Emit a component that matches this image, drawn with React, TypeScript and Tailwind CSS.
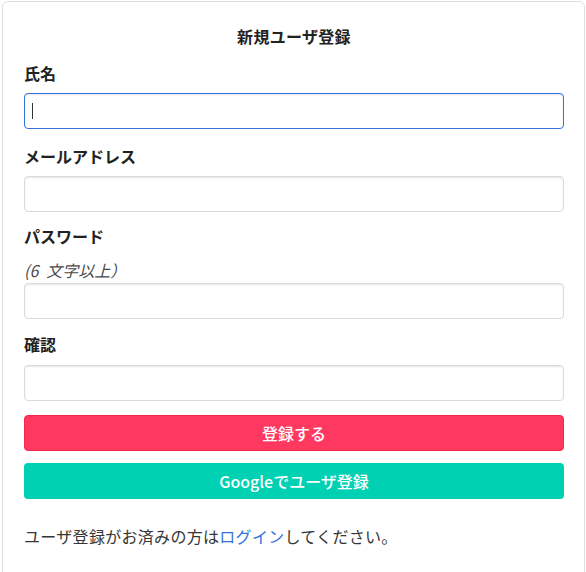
import { useState } from 'react'

const font = { fontFamily: '"Noto Sans CJK JP", "Noto Sans", sans-serif' }

const inputBase =
  'block w-full h-9 rounded-[4px] border bg-white px-[11px] text-[16px] text-[#363636] outline-none shadow-[inset_0_1px_2px_rgba(10,10,10,0.1)]'

const labelCls = 'block text-[16px] leading-6 font-bold text-[#222]'

export default function App() {
  const [name, setName] = useState('')
  const [email, setEmail] = useState('')
  const [password, setPassword] = useState('')
  const [confirm, setConfirm] = useState('')

  return (
    <div className="min-h-[572px] bg-white" style={font}>
      <div className="ml-[2px] mt-[1px] w-[583px] min-h-[580px] rounded-t-[6px] border border-[#dedede] pl-[21px] pr-[20px] pt-[22px]">
        {/* タイトル */}
        <h1 className="text-center text-[16px] leading-6 font-bold tracking-[0.3px] text-[#222]">新規ユーザ登録</h1>

        {/* 氏名 */}
        <label className={`mt-[13px] ${labelCls}`}>氏名</label>
        <div className="relative mt-[8px]">
          <input
            className={`${inputBase} border-[#3273dc] shadow-[0_0_0_2px_rgba(50,115,220,0.3)]`}
            value={name}
            onChange={(e) => setName(e.target.value)}
          />
          {/* カーソル */}
          <span className="pointer-events-none absolute left-[8px] top-[10px] h-[16px] w-px bg-[#333]" />
        </div>

        {/* メールアドレス */}
        <label className={`mt-[15px] ${labelCls}`}>メールアドレス</label>
        <input
          className={`${inputBase} mt-[8px] border-[#dbdbdb]`}
          value={email}
          onChange={(e) => setEmail(e.target.value)}
        />

        {/* パスワード */}
        <label className={`mt-[12px] ${labelCls}`}>パスワード</label>
        <p className="mt-[10px] text-[16px] leading-6 italic text-[#4a4a4a]">(6{'\u2002'}文字以上）</p>
        <input
          type="password"
          className={`${inputBase} mt-[1px] border-[#dbdbdb]`}
          value={password}
          onChange={(e) => setPassword(e.target.value)}
        />

        {/* 確認 */}
        <label className={`mt-[13px] ${labelCls}`}>確認</label>
        <input
          type="password"
          className={`${inputBase} mt-[9px] border-[#dbdbdb]`}
          value={confirm}
          onChange={(e) => setConfirm(e.target.value)}
        />

        {/* ボタン */}
        <button className="mt-[14px] flex h-9 w-full items-center justify-center rounded-[4px] border border-[#f7264f] bg-[#ff3860] text-[16px] font-medium text-white">
          登録する
        </button>
        <button className="mt-[12px] flex h-9 w-full items-center justify-center rounded-[4px] bg-[#00d1b2] text-[16px] font-medium text-white">
          Googleでユーザ登録
        </button>

        <p className="mt-[25px] text-[16px] leading-6 tracking-[0.3px] text-[#363636]">
          ユーザ登録がお済みの方は<a href="#" className="text-[#3273dc]">ログイン</a>してください。
        </p>
      </div>
    </div>
  )
}
